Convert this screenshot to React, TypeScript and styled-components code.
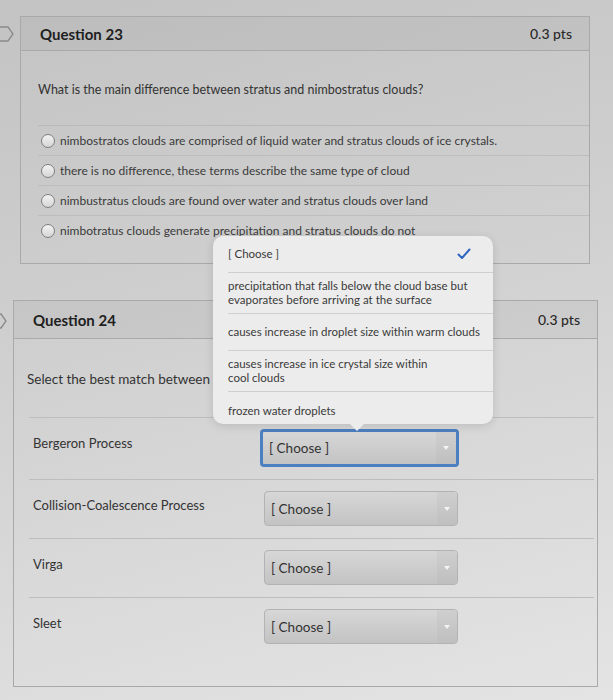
import React from 'react';
import styled, { createGlobalStyle } from 'styled-components';

const GlobalStyle = createGlobalStyle`
  body {
    margin: 0;
    background: linear-gradient(165deg, #c3c3c3 0%, #cfcfcf 40%, #e4e4e4 100%);
    font-family: Lato, "Liberation Sans", Arial, sans-serif;
    color: #333;
  }
`;

const Page = styled.div`
  position: relative;
  height: 700px;
  overflow: hidden;
  padding-top: 16px;
  box-sizing: border-box;
`;

const Card = styled.section<{ $left: number; $width: number; $gap?: number }>`
  position: relative;
  margin-left: ${(p) => p.$left}px;
  margin-top: ${(p) => p.$gap ?? 0}px;
  width: ${(p) => p.$width}px;
  border: 1px solid #a9a9a9;
  box-sizing: border-box;
`;

const Header = styled.header<{ $height: number }>`
  display: flex;
  align-items: center;
  justify-content: space-between;
  height: ${(p) => p.$height}px;
  padding: 0 17px 0 19px;
  background: rgba(0, 0, 0, 0.035);
  border-bottom: 1px solid #a9a9a9;
`;

const Title = styled.h2`
  margin: 0;
  font-size: 15px;
  font-weight: 700;
  color: #1f1f1f;
`;

const Points = styled.span`
  font-size: 14px;
  font-weight: 500;
  color: #2a2a2a;
`;

const Flag = styled.svg<{ $top: number }>`
  position: absolute;
  left: -22px;
  top: ${(p) => p.$top}px;
`;

const Body = styled.div<{ $pad: string }>`
  padding: ${(p) => p.$pad};
`;

const Prompt = styled.p<{ $size: number }>`
  margin: 0;
  font-size: ${(p) => p.$size}px;
  color: #333;
`;

const AnswerList = styled.ul`
  list-style: none;
  margin: 28px 0 0;
  padding: 0;
  border-top: 1px solid #b9b9b9;
`;

const Answer = styled.li`
  display: flex;
  align-items: center;
  gap: 5px;
  height: 29px;
  padding-left: 3px;
  border-bottom: 1px solid #bdbdbd;
  font-size: 12px;
  color: #3a3a3a;
  &:last-child {
    border-bottom: none;
  }
`;

const Radio = styled.span`
  width: 12px;
  height: 12px;
  border-radius: 50%;
  border: 1px solid #7e7e7e;
  background: linear-gradient(#f2f2f2, #d6d6d6);
  flex-shrink: 0;
`;

const MatchList = styled.div`
  margin: 30px 3px 0 2px;
`;

const MatchRow = styled.div`
  display: flex;
  align-items: center;
  padding: 11px 0 12px;
  border-top: 1px solid #bdbdbd;
`;

const MatchLabel = styled.span`
  width: 227px;
  padding-left: 4px;
  font-size: 13px;
  color: #333;
  align-self: flex-start;
  padding-top: 6px;
`;

const Select = styled.div<{ $focused?: boolean }>`
  display: flex;
  align-items: center;
  width: ${(p) => (p.$focused ? 199 : 194)}px;
  height: ${(p) => (p.$focused ? 38 : 35)}px;
  box-sizing: border-box;
  margin-left: ${(p) => (p.$focused ? 0 : 4)}px;
  border: ${(p) => (p.$focused ? '3px solid #4c7fbf' : '1px solid #b3b3b3')};
  border-radius: 4px;
  background: linear-gradient(#d7d7d7, #c3c3c3);
  overflow: hidden;
`;

const SelectText = styled.span`
  flex: 1;
  padding-left: 6px;
  font-size: 13.5px;
  color: #333;
`;

const SelectArrow = styled.span`
  width: 20px;
  height: 100%;
  display: flex;
  align-items: center;
  justify-content: center;
  background: linear-gradient(#cfcfcf, #bfbfbf);
  &::after {
    content: '';
    border-left: 3px solid transparent;
    border-right: 3px solid transparent;
    border-top: 4px solid #f4f4f4;
  }
`;

const Popup = styled.div`
  position: absolute;
  left: 213px;
  top: 236px;
  width: 280px;
  padding-left: 15px;
  box-sizing: border-box;
  background: #ececec;
  border-radius: 10px;
  box-shadow: 0 2px 10px rgba(0, 0, 0, 0.12);
  &::after {
    content: '';
    position: absolute;
    left: 136px;
    bottom: -7px;
    border-left: 8px solid transparent;
    border-right: 8px solid transparent;
    border-top: 8px solid #ececec;
  }
`;

const Option = styled.div`
  display: flex;
  align-items: center;
  justify-content: space-between;
  min-height: 37px;
  padding: 6px 22px 6px 0;
  box-sizing: border-box;
  border-bottom: 1px solid #cfcfcf;
  font-size: 11.5px;
  line-height: 14px;
  white-space: nowrap;
  color: #3a3a3a;
  &:last-child {
    min-height: 32px;
    padding: 8px 22px 2px 0;
    border-bottom: none;
  }
`;

const answers = [
  'nimbostratos clouds are comprised of liquid water and stratus clouds of ice crystals.',
  'there is no difference, these terms describe the same type of cloud',
  'nimbustratus clouds are found over water and stratus clouds over land',
  'nimbotratus clouds generate precipitation and stratus clouds do not',
];

const matches = ['Bergeron Process', 'Collision-Coalescence Process', 'Virga', 'Sleet'];

const options = [
  ['precipitation that falls below the cloud base but', 'evaporates before arriving at the surface'],
  ['causes increase in droplet size within warm clouds'],
  ['causes increase in ice crystal size within', 'cool clouds'],
  ['frozen water droplets'],
];

const FlagIcon = ({ top }: { top: number }) => (
  <Flag $top={top} width="16" height="20" viewBox="0 0 16 20">
    <path d="M-2 3 H9 L14 10 L9 17 H-2" fill="none" stroke="#8a8a8a" strokeWidth="1.3" />
  </Flag>
);

export default function App() {
  return (
    <Page>
      <GlobalStyle />
      <Card $left={20} $width={570}>
        <FlagIcon top={7} />
        <Header $height={33}>
          <Title>Question 23</Title>
          <Points>0.3 pts</Points>
        </Header>
        <Body $pad="31px 0 18px 17px">
          <Prompt $size={12.5}>What is the main difference between stratus and nimbostratus clouds?</Prompt>
          <AnswerList>
            {answers.map((a) => (
              <Answer key={a}>
                <Radio />
                {a}
              </Answer>
            ))}
          </AnswerList>
        </Body>
      </Card>

      <Card $left={13} $width={585} $gap={36}>
        <FlagIcon top={10} />
        <Header $height={37}>
          <Title>Question 24</Title>
          <Points>0.3 pts</Points>
        </Header>
        <Body $pad="32px 0 30px 13px">
          <Prompt $size={13.5}>Select the best match between</Prompt>
          <MatchList>
            {matches.map((m, i) => (
              <MatchRow key={m}>
                <MatchLabel>{m}</MatchLabel>
                <Select $focused={i === 0}>
                  <SelectText>[ Choose ]</SelectText>
                  <SelectArrow />
                </Select>
              </MatchRow>
            ))}
          </MatchList>
        </Body>
      </Card>

      <Popup>
        <Option>
          <span>[ Choose ]</span>
          <svg width="14" height="12" viewBox="0 0 14 12">
            <path d="M1.5 6.5 L5 10 L12.5 1.5" fill="none" stroke="#2f64c2" strokeWidth="2" strokeLinecap="round" strokeLinejoin="round" />
          </svg>
        </Option>
        {options.map((lines) => (
          <Option key={lines[0]}>
            <span>
              {lines.map((l, i) => (
                <React.Fragment key={l}>
                  {i > 0 && <br />}
                  {l}
                </React.Fragment>
              ))}
            </span>
          </Option>
        ))}
      </Popup>
    </Page>
  );
}
